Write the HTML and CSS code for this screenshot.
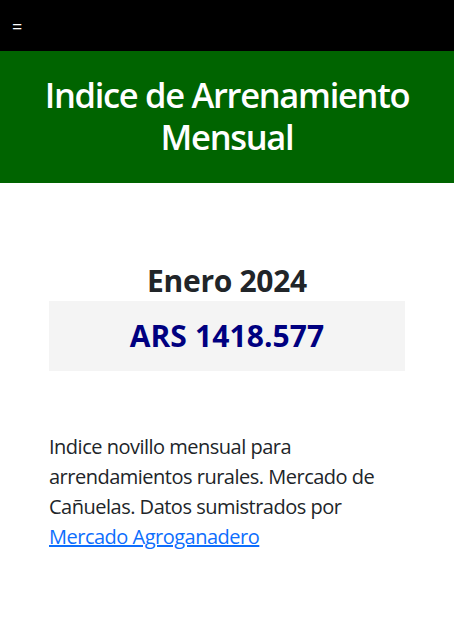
FILE: index.html
```html
<!DOCTYPE html>
<html lang="es">
<head>
<meta charset="utf-8">
<title>Indice de Arrenamiento Mensual</title>
<link rel="stylesheet" href="styles.css">
</head>
<body>
<nav class="topbar">
  <span class="menu-toggle">=</span>
</nav>
<header class="hero">
  <h1 class="hero-title">Indice de Arrenamiento Mensual</h1>
</header>
<main class="content">
  <h2 class="period">Enero 2024</h2>
  <div class="value-box">
    <span class="value">ARS 1418.577</span>
  </div>
  <p class="lead">Indice novillo mensual para arrendamientos rurales. Mercado de Cañuelas. Datos sumistrados por <a href="#">Mercado Agroganadero</a></p>
</main>
</body>
</html>
```
FILE: styles.css
```css
* { box-sizing: border-box; }
html, body {
  margin: 0;
  padding: 0;
  background: #fff;
}
body {
  font-family: "Open Sans", "Noto Sans", sans-serif;
  color: #212529;
}
.topbar {
  background: #000;
  height: 51px;
  display: flex;
  align-items: center;
  padding: 0 12px;
}
.menu-toggle {
  color: #fff;
  font-size: 18px;
  line-height: 1;
  margin-top: 0;
}
.hero {
  background: #006400;
  padding: 23px 24px 25px;
}
.hero-title {
  margin: 0;
  color: #fff;
  font-size: 34.5px;
  font-weight: 600;
  line-height: 42px;
  text-align: center;
  letter-spacing: -1.3px;
}
.content {
  padding: 80px 49px 40px 49px;
}
.period {
  margin: 0 0 3px;
  text-align: center;
  font-size: 30px;
  line-height: 35px;
  font-weight: 700;
  color: #212529;
  letter-spacing: -0.3px;
}
.value-box {
  background: #f4f4f4;
  height: 70px;
  display: flex;
  align-items: center;
  justify-content: center;
}
.value {
  color: #000080;
  font-size: 30px;
  font-weight: 700;
  line-height: 36px;
  letter-spacing: 0.1px;
}
.lead {
  margin: 61px 0 0;
  font-size: 20px;
  line-height: 30px;
  font-weight: 400;
  letter-spacing: -0.5px;
}
.lead a {
  color: #0d6efd;
  text-decoration: underline;
}
```
